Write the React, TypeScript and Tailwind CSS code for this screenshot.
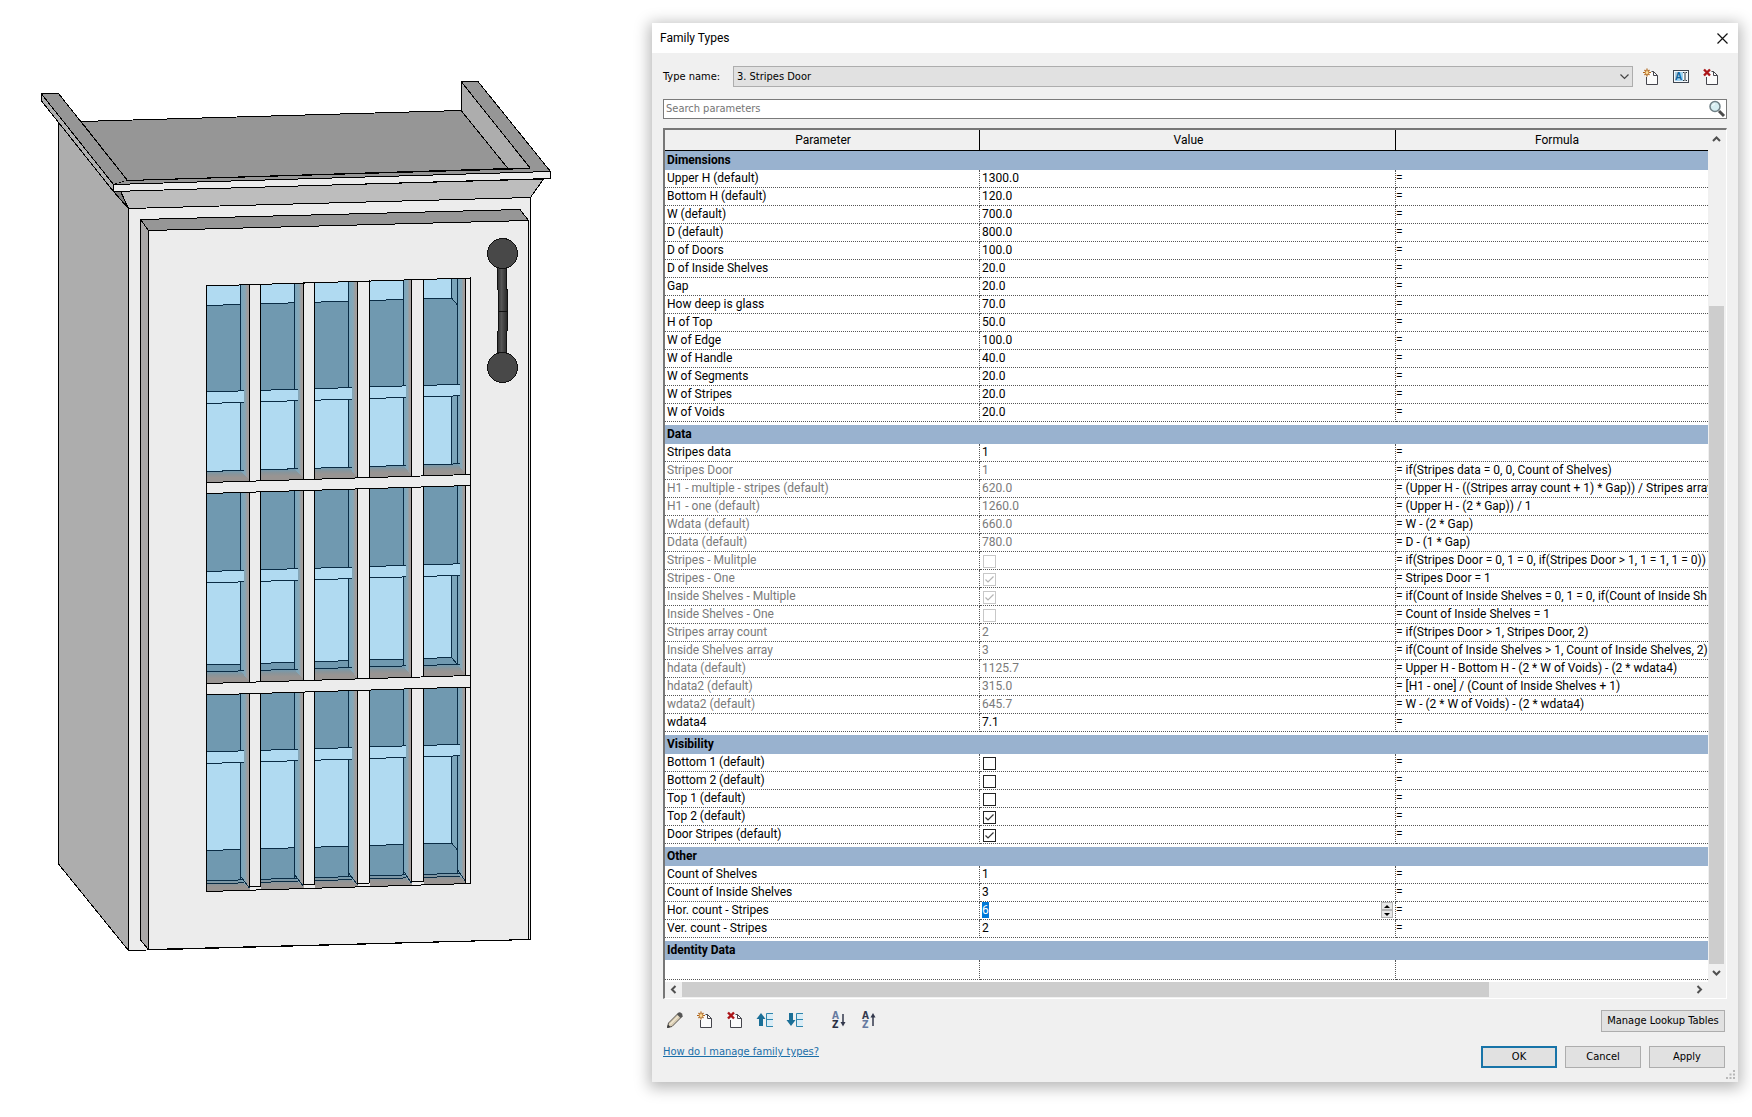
import { useEffect, useRef, useState } from 'react';

type Row = {
  name: string;
  value: string | boolean;
  formula?: string;
  locked?: boolean;
  spinner?: boolean;
};

const GROUPS: { title: string; rows: Row[] }[] = [
  {
    title: 'Dimensions',
    rows: [
      { name: 'Upper H (default)', value: '1300.0' },
      { name: 'Bottom H (default)', value: '120.0' },
      { name: 'W (default)', value: '700.0' },
      { name: 'D (default)', value: '800.0' },
      { name: 'D of Doors', value: '100.0' },
      { name: 'D of Inside Shelves', value: '20.0' },
      { name: 'Gap', value: '20.0' },
      { name: 'How deep is glass', value: '70.0' },
      { name: 'H of Top', value: '50.0' },
      { name: 'W of Edge', value: '100.0' },
      { name: 'W of Handle', value: '40.0' },
      { name: 'W of Segments', value: '20.0' },
      { name: 'W of Stripes', value: '20.0' },
      { name: 'W of Voids', value: '20.0' },
    ],
  },
  {
    title: 'Data',
    rows: [
      { name: 'Stripes data', value: '1' },
      { name: 'Stripes Door', value: '1', formula: 'if(Stripes data = 0, 0, Count of Shelves)', locked: true },
      { name: 'H1 - multiple - stripes (default)', value: '620.0', formula: '(Upper H - ((Stripes array count + 1) * Gap)) / Stripes array', locked: true },
      { name: 'H1 - one (default)', value: '1260.0', formula: '(Upper H - (2 * Gap)) / 1', locked: true },
      { name: 'Wdata (default)', value: '660.0', formula: 'W - (2 * Gap)', locked: true },
      { name: 'Ddata (default)', value: '780.0', formula: 'D - (1 * Gap)', locked: true },
      { name: 'Stripes - Mulitple', value: false, formula: 'if(Stripes Door = 0, 1 = 0, if(Stripes Door > 1, 1 = 1, 1 = 0))', locked: true },
      { name: 'Stripes - One', value: true, formula: 'Stripes Door = 1', locked: true },
      { name: 'Inside Shelves - Multiple', value: true, formula: 'if(Count of Inside Shelves = 0, 1 = 0, if(Count of Inside Sh', locked: true },
      { name: 'Inside Shelves - One', value: false, formula: 'Count of Inside Shelves = 1', locked: true },
      { name: 'Stripes array count', value: '2', formula: 'if(Stripes Door > 1, Stripes Door, 2)', locked: true },
      { name: 'Inside Shelves array', value: '3', formula: 'if(Count of Inside Shelves > 1, Count of Inside Shelves, 2)', locked: true },
      { name: 'hdata (default)', value: '1125.7', formula: 'Upper H - Bottom H - (2 * W of Voids) - (2 * wdata4)', locked: true },
      { name: 'hdata2 (default)', value: '315.0', formula: '[H1 - one] / (Count of Inside Shelves + 1)', locked: true },
      { name: 'wdata2 (default)', value: '645.7', formula: 'W - (2 * W of Voids) - (2 * wdata4)', locked: true },
      { name: 'wdata4', value: '7.1' },
    ],
  },
  {
    title: 'Visibility',
    rows: [
      { name: 'Bottom 1 (default)', value: false },
      { name: 'Bottom 2 (default)', value: false },
      { name: 'Top 1 (default)', value: false },
      { name: 'Top 2 (default)', value: true },
      { name: 'Door Stripes (default)', value: true },
    ],
  },
  {
    title: 'Other',
    rows: [
      { name: 'Count of Shelves', value: '1' },
      { name: 'Count of Inside Shelves', value: '3' },
      { name: 'Hor. count - Stripes', value: '6', spinner: true },
      { name: 'Ver. count - Stripes', value: '2' },
    ],
  },
];

/* ---------- cabinet drawing ---------- */

const EDGE = '#0a2c45';
const LIGHT = '#b0daf1';
const DARK = '#7099b0';

// the front is seen slightly from the left, so every level climbs to the right
const at = (x: number, y: number) => `${x},${(y - (x - 206) * 0.0303).toFixed(1)}`;
const quad = (x1: number, x2: number, y1: number, y2: number) =>
  [at(x1, y1), at(x2, y1), at(x2, y2), at(x1, y2)].join(' ');
const edge = (x1: number, x2: number, y: number) => `M${at(x1, y)}L${at(x2, y)}`;

const PANES = [
  { left: 206.5, wall: 240.5, shelf: 244, right: 249.5 },
  { left: 260.5, wall: 294.5, shelf: 298, right: 303.5 },
  { left: 314.5, wall: 348.5, shelf: 352, right: 357.5 },
  { left: 369.5, wall: 403.5, shelf: 406, right: 411.5 },
  { left: 423.5, wall: 457.5, shelf: 460, right: 465.5 },
];

const SECTIONS = [
  { top: 286, ceiling: 305.5, shelf: 392, back: 471.5, floor: 471.5, bottom: 482.5 },
  { top: 493.5, ceiling: 493.5, shelf: 571.5, back: 665, floor: 672, bottom: 683.5 },
  { top: 695, ceiling: 695, shelf: 752, back: 850.5, floor: 881, bottom: 891.5 },
];

function Pane({ pane, section }: { pane: (typeof PANES)[0]; section: (typeof SECTIONS)[0] }) {
  const { left, wall, shelf, right } = pane;
  const s = section;
  const last = left > 420;
  const backEnd = last ? 451.5 : wall;
  const openTop = s.ceiling > s.top;
  const openFloor = s.floor > s.back;
  return (
    <g>
      <polygon points={quad(left, right, s.top, s.bottom)} fill={DARK} />
      {openTop && <polygon points={quad(left, backEnd, s.top, s.ceiling)} fill={LIGHT} />}
      <polygon points={quad(left, backEnd, s.shelf, s.back)} fill={LIGHT} />
      {last && (
        <g stroke={EDGE}>
          <polygon points={[at(451.5, s.shelf), at(wall, s.shelf), at(wall, openFloor ? s.back + 7 : s.back), at(451.5, s.back)].join(' ')} fill="#7ba5ba" />
          {openTop && (
            <polygon points={[at(451.5, s.top), at(wall, s.top), at(wall, s.ceiling + 7), at(451.5, s.ceiling)].join(' ')} fill="#7ba5ba" />
          )}
        </g>
      )}
      <polygon points={quad(left, right, s.floor, s.bottom)} fill="url(#sill)" />
      <polygon points={[at(wall, s.top), at(right, s.top), at(right, s.bottom - 1), at(wall, s.floor)].join(' ')} fill="url(#jamb)" />
      <path d={`M${at(wall, s.top)}L${at(wall, s.floor)}`} stroke={EDGE} />
      {openTop && <path d={edge(left, backEnd, s.ceiling)} stroke={EDGE} />}
      <path d={edge(left, backEnd, s.back)} stroke={EDGE} />
      <path d={edge(left, shelf, s.floor)} stroke={EDGE} />
      {s.bottom > 880 && <path d={`${edge(left, right - 5, s.floor + 3)}M${at(wall, s.floor - 4)}L${at(right, s.bottom - 2)}`} stroke={EDGE} />}
      <polygon points={quad(left, shelf, s.shelf, s.shelf + 11.5)} fill={LIGHT} />
      <path d={edge(left, shelf, s.shelf) + edge(left, shelf, s.shelf + 11.5)} stroke={EDGE} />
    </g>
  );
}

function Cabinet() {
  return (
    <svg viewBox="30 70 530 890" width="530" height="890" fill="none" stroke="none" shapeRendering="crispEdges" role="img" aria-label="Cabinet with stripes door">
      <defs>
        <linearGradient id="jamb">
          <stop offset="0" stopColor="#78a5bd" />
          <stop offset="0.5" stopColor="#86a7b7" />
          <stop offset="0.75" stopColor="#9f9c9c" />
          <stop offset="1" stopColor="#a59f9d" />
        </linearGradient>
        <linearGradient id="sill" x2="0" y2="1">
          <stop offset="0" stopColor="#6f9bb3" />
          <stop offset="0.35" stopColor="#8a9499" />
          <stop offset="0.6" stopColor="#989492" />
        </linearGradient>
        <linearGradient id="bar">
          <stop offset="0" stopColor="#303030" />
          <stop offset="0.4" stopColor="#565656" />
          <stop offset="1" stopColor="#262626" />
        </linearGradient>
      </defs>
      <g stroke="#000">
        {/* body */}
        <polygon points="58.5,122.5 128.5,208.5 128.5,950.5 58.5,864" fill="#adadad" />
        <polygon points="128.5,208.5 530.5,197.5 530.5,939.5 128.5,950.5" fill="#ececec" />
        {/* top board and crown */}
        <polygon points="81,121.5 461.5,110.5 508.5,168.5 127.5,180.5" fill="#969696" />
        <polygon points="113,191 120.5,191 128,208" fill="#7c7c7c" />
        <polygon points="41.5,94 113.5,184.5 113.5,191.5 41.5,101" fill="#b0b0b0" />
        <polygon points="41.5,94 58.5,93.5 127.5,180.5 113.5,184.5" fill="#969696" />
        <polygon points="461.5,82 530.5,168.5 508,168.5 461.5,111" fill="#adadad" />
        <polygon points="127.5,180.5 530.5,168.5 550.5,171.5 113.5,184.5" fill="#969696" stroke="none" />
        <path d="M127.5 180.5L530.5 168.5" />
        <polygon points="461.5,82 478,81.5 550.5,171.5 530.5,171.5 530.5,168.5" fill="#969696" stroke="none" />
        <path d="M530.5 168.5L461.5 82L478 81.5L550.5 171.5" />
        <polygon points="120.5,191 543.5,179 530.5,197.5 128.5,208.5" fill="#bdbdbd" />
        <polygon points="113.5,184.5 550.5,171.5 550.5,178.5 113.5,191.5" fill="#ececec" />
        {/* door */}
        <polygon points="140.5,219.5 148.5,230.5 148.5,949.5 140.5,940" fill="#aaa8a8" />
        <polygon points="140.5,219.5 520,209.5 528.5,220.5 148.5,230.5" fill="#969696" />
        <polygon points="148.5,230.5 528.5,220.5 528.5,939.5 148.5,949.5" fill="#ececec" />
      </g>
      {SECTIONS.map(section => PANES.map(pane => <Pane key={`${section.top}-${pane.left}`} pane={pane} section={section} />))}
      <g stroke="#000">
        {PANES.slice(0, 4).map((pane, i) => (
          <polygon key={pane.left} points={quad(pane.right, PANES[i + 1].left, 286, 888)} fill="#ececec" />
        ))}
        <polygon points={quad(465.5, 470.5, 286, 891)} fill="#ececec" />
        <polygon points={quad(206.5, 470.5, 482.5, 493.5)} fill="#ececec" />
        <polygon points={quad(206.5, 470.5, 683.5, 695)} fill="#ececec" />
        <polygon points={quad(206.5, 470.5, 286, 891.5)} />
      </g>
      {/* handle */}
      <path d="M497.5 267L498.5 311L497.5 352H506.5L507.5 311L506.5 267Z" fill="url(#bar)" stroke="#111" />
      <path d="M498 311.5H507.5" stroke="#111" />
      <circle cx="502.5" cy="253.5" r="15" fill="#484848" stroke="#111" />
      <circle cx="502.5" cy="367.5" r="15" fill="#484848" stroke="#111" />
    </svg>
  );
}

/* ---------- icons ---------- */

function PageIcon({ kind }: { kind: 'new' | 'delete' }) {
  return (
    <svg width="16" height="18" viewBox="0 0 16 18" fill="none">
      <path d="M3.5 8.5V16.5H14.5V7.5L11 3.5H8.5" fill="#fbfbfb" />
      <path d="M3.5 9V16.5H14.5V7.5H10.5V3.5H8.5M10.5 3.5L14.5 7.5" stroke="#45454c" />
      {kind === 'new' ? (
        <g stroke="#b0651a">
          <path d="M4 0.5V8.5M0 4.5H8M1.5 2L6.5 7M6.5 2L1.5 7" strokeWidth="1.2" />
          <circle cx="4" cy="4.5" r="1.5" fill="#ffdf9a" stroke="none" />
        </g>
      ) : (
        <path d="M1 1.5L7 7.5M7 1.5L1 7.5" stroke="#ab1519" strokeWidth="2.4" />
      )}
    </svg>
  );
}

function RenameIcon() {
  return (
    <svg width="18" height="16" viewBox="0 0 18 16" fill="none">
      <rect x="1.5" y="1.5" width="15" height="12" fill="#f5f8fa" stroke="#3f4650" />
      <rect x="3" y="3" width="8" height="9" fill="#a5d2ee" />
      <text x="3" y="11" fontSize="10" fontWeight="700" fontFamily="Liberation Sans, sans-serif" fill="#12649a">A</text>
      <path d="M11 3.5H12.5M13.5 3.5H15M13 4V11M11 11.5H12.5M13.5 11.5H15" stroke="#26323c" />
    </svg>
  );
}

function PencilIcon() {
  return (
    <svg width="18" height="18" viewBox="0 0 18 18" fill="none">
      <path d="M1.5 16.5L2.5 12L12.5 2L16 5.5L6 15.5Z" fill="#d9cdb4" stroke="#57534e" />
      <path d="M4 13.5L14 3.5" stroke="#fff7e2" />
      <path d="M11 3.5L12.5 1.5Q14 0.8 15.5 2.2T16.5 5.5L14.5 7Z" fill="#555" />
      <path d="M1 17L2 13.5L4.5 16Z" fill="#3a3a3a" />
    </svg>
  );
}

function MoveIcon({ down }: { down?: boolean }) {
  return (
    <svg width="18" height="18" viewBox="0 0 18 18" fill="none">
      <path d={down ? 'M3 2H7V9H9.5L5 15L0.5 9H3Z' : 'M3 15H7V8H9.5L5 2L0.5 8H3Z'} fill="#1b6f97" />
      <rect x="11" y="2" width="6" height="13" fill="#d9edf7" />
      <path d="M17 2.5H10.5V15.5H17M10.5 8.5H17" stroke="#2f86ae" />
    </svg>
  );
}

function SortIcon({ up }: { up?: boolean }) {
  return (
    <svg width="16" height="18" viewBox="0 0 16 18" fill="none">
      <g fontSize="10" fontWeight="700" fontFamily="DejaVu Sans Condensed, DejaVu Sans, sans-serif">
        <text x="1" y="8" fill={up ? '#33384c' : '#667a9f'}>A</text>
        <text x="1" y="17" fill={up ? '#667a9f' : '#2b3044'}>Z</text>
      </g>
      <path d={up ? 'M12 15V4' : 'M12 3V13'} stroke="#33384c" strokeWidth="1.5" />
      <path d={up ? 'M9.5 6.5L12 2L14.5 6.5Z' : 'M9.5 11L12 15.5L14.5 11Z'} fill="#33384c" />
    </svg>
  );
}

function SearchIcon() {
  return (
    <svg width="18" height="18" viewBox="0 0 18 18" fill="none">
      <path d="M11 11L16 16" stroke="#4a4a4a" strokeWidth="3" />
      <circle cx="7" cy="6.5" r="5" fill="#d6eef2" stroke="#6f7f85" strokeWidth="1.5" />
      <path d="M4.5 6Q5 4 7 3.8" stroke="#fff" />
    </svg>
  );
}

const CHEVRONS = {
  up: 'M2 7L5.5 3.5L9 7',
  down: 'M2 4L5.5 7.5L9 4',
  left: 'M7.5 2L4 5.5L7.5 9',
  right: 'M3.5 2L7 5.5L3.5 9',
};

function Chevron({ dir }: { dir: keyof typeof CHEVRONS }) {
  return (
    <svg width="11" height="11" viewBox="0 0 11 11" fill="none">
      <path d={CHEVRONS[dir]} stroke="#505050" strokeWidth="2" />
    </svg>
  );
}

function Grip() {
  return (
    <svg width="9" height="9" viewBox="0 0 9 9" fill="#b8b8b8">
      <path d="M7 0h2v2h-2zM3.5 3.5h2v2h-2zM7 3.5h2v2h-2zM0 7h2v2h-2zM3.5 7h2v2h-2zM7 7h2v2h-2z" />
    </svg>
  );
}

/* ---------- table ---------- */

function Check({ label, locked, initial }: { label: string; locked?: boolean; initial: boolean }) {
  const [on, setOn] = useState(initial);
  return (
    <span className="ml-px grid w-[13px] pt-[3px]">
      <input
        type="checkbox"
        aria-label={label}
        checked={on}
        disabled={locked}
        onChange={e => setOn(e.target.checked)}
        className="col-start-1 row-start-1 size-[13px] appearance-none border border-[#222] bg-white disabled:border-[#c8c8c8]"
      />
      {on && (
        <svg viewBox="0 0 13 13" fill="none" className="pointer-events-none col-start-1 row-start-1 size-[13px]">
          <path d="M2.5 6.5L5 9L10.5 3.5" stroke={locked ? '#b4b4b4' : '#333'} strokeWidth="1.2" />
        </svg>
      )}
    </span>
  );
}

function ValueCell({ row }: { row: Row }) {
  const ref = useRef<HTMLInputElement>(null);

  useEffect(() => {
    if (row.spinner) {
      ref.current?.focus();
      ref.current?.select();
    }
  }, [row.spinner]);

  if (typeof row.value === 'boolean') {
    return <Check label={row.name} locked={row.locked} initial={row.value} />;
  }
  return (
    <div className="flex h-4 items-center">
      <input
        ref={ref}
        aria-label={row.name}
        defaultValue={row.value}
        readOnly={row.locked}
        className="h-4 min-w-0 flex-1 bg-transparent leading-4 outline-none selection:bg-[#0078d7] selection:text-white"
      />
      {row.spinner && (
        <span className="mr-[2px] flex w-3 flex-col">
          <button aria-label="Increase" className="flex h-2 items-center justify-center border border-[#b5b5b5] bg-[#e8e8e8]">
            <svg width="6" height="3" viewBox="0 0 6 3"><path d="M0 3L3 0L6 3Z" fill="#000" /></svg>
          </button>
          <button aria-label="Decrease" className="flex h-2 items-center justify-center border border-[#b5b5b5] bg-[#e8e8e8]">
            <svg width="6" height="3" viewBox="0 0 6 3"><path d="M0 0L3 3L6 0Z" fill="#000" /></svg>
          </button>
        </span>
      )}
    </div>
  );
}

function GroupHeader({ title, first }: { title: string; first?: boolean }) {
  return (
    <tr>
      <th
        colSpan={3}
        className={
          first
            ? 'h-[19px] bg-[#99b2cf] p-0 pb-[2px] pl-[2px] text-left font-bold'
            : 'h-[22px] border-t-[3px] border-white bg-[#99b2cf] p-0 pb-[2px] pl-[2px] text-left font-bold'
        }
      >
        {title}
      </th>
    </tr>
  );
}

function ParameterTable() {
  const cell = 'h-[18px] border-b border-dotted border-[#555] p-0 align-top';
  return (
    <table className="w-full table-fixed border-separate border-spacing-0 bg-white font-[Roboto,sans-serif] text-[12px] leading-4 text-black">
      <colgroup>
        <col className="w-[315px]" />
        <col className="w-[416px]" />
        <col />
      </colgroup>
      <thead>
        <tr className="bg-[#f0f0f0]">
          <th className="h-[21px] border-r border-b border-black p-0 pl-[2px] font-normal">Parameter</th>
          <th className="h-[21px] border-r border-b border-black p-0 pl-[2px] font-normal">Value</th>
          <th className="h-[21px] border-b border-black p-0 pl-[10px] font-normal">Formula</th>
        </tr>
      </thead>
      {GROUPS.map((group, i) => (
        <tbody key={group.title}>
          <GroupHeader title={group.title} first={i === 0} />
          {group.rows.map(row => (
            <tr key={row.name}>
              <td className={`${cell} truncate border-r pl-[2px] ${row.locked ? 'text-[#7a7a7a]' : ''}`}>{row.name}</td>
              <td className={`${cell} border-r pl-[2px] ${row.locked ? 'text-[#7a7a7a]' : ''}`}>
                <ValueCell row={row} />
              </td>
              <td className={`${cell} overflow-hidden whitespace-nowrap`}>= {row.formula}</td>
            </tr>
          ))}
        </tbody>
      ))}
      <tbody>
        <GroupHeader title="Identity Data" />
        <tr>
          <td className="h-5 border-r border-b border-dotted border-[#555]" />
          <td className="h-5 border-r border-b border-dotted border-[#555]" />
          <td className="h-5 border-b border-dotted border-[#555]" />
        </tr>
      </tbody>
    </table>
  );
}

const iconButton = 'flex h-6 w-6 items-center justify-center';
const pushButton = 'h-[22px] border border-[#adadad] bg-[#e1e1e1] text-center';

function FamilyTypes() {
  return (
    <main className="mt-[23px] mr-[14px] min-w-0 flex-1 self-start bg-[#f0f0f0] text-black shadow-[0_3px_14px_3px_rgba(0,0,0,0.28)]">
      <header className="flex h-[30px] items-center justify-between bg-white pr-[10px] pl-2">
        <h1 className="font-[Roboto,sans-serif] text-[12px] leading-4">Family Types</h1>
        <button aria-label="Close">
          <svg width="11" height="11" viewBox="0 0 11 11" fill="none"><path d="M0.5 0.5L10.5 10.5M10.5 0.5L0.5 10.5" stroke="#111" strokeWidth="1.2" /></svg>
        </button>
      </header>

      <div className="px-[11px] pt-[13px] font-['DejaVu_Sans_Condensed','DejaVu_Sans',sans-serif] text-[11px] leading-4">
        <div className="flex h-[21px] items-center">
          <label htmlFor="type-name" className="w-[70px]">Type name:</label>
          <div className="grid flex-1 items-center">
            <select id="type-name" className="col-start-1 row-start-1 h-[21px] w-full appearance-none border border-[#adadad] bg-[#e1e1e1] pl-[3px]">
              <option>3. Stripes Door</option>
            </select>
            <svg width="9" height="6" viewBox="0 0 9 6" fill="none" className="pointer-events-none col-start-1 row-start-1 mr-1 justify-self-end">
              <path d="M0.5 0.5L4.5 4.5L8.5 0.5" stroke="#444" strokeWidth="1.2" />
            </svg>
          </div>
          <div className="mr-1 ml-[6px] flex gap-[6px]">
            <button aria-label="New type" className={iconButton}><PageIcon kind="new" /></button>
            <button aria-label="Rename type" className={iconButton}><RenameIcon /></button>
            <button aria-label="Delete type" className={iconButton}><PageIcon kind="delete" /></button>
          </div>
        </div>

        <div className="mt-3 flex h-5 items-center border border-[#7a7a7a] bg-white">
          <input aria-label="Search parameters" placeholder="Search parameters" className="min-w-0 flex-1 pl-[2px] outline-none placeholder:text-[#757575]" />
          <button aria-label="Search"><SearchIcon /></button>
        </div>

        <div className="mt-[9px] border-t-2 border-r border-b border-l-2 border-t-[#777] border-r-white border-b-white border-l-[#777]">
          <div className="flex">
            <div className="min-w-0 flex-1 bg-white pb-[2px]">
              <ParameterTable />
            </div>
            <div className="flex w-[18px] flex-col">
              <button aria-label="Scroll up" className="flex h-[18px] items-center justify-center pr-px"><Chevron dir="up" /></button>
              <div className="flex flex-1 flex-col pt-[158px]">
                <div className="mr-[2px] ml-px flex-1 bg-[#cdcdcd]" />
              </div>
              <button aria-label="Scroll down" className="flex h-[18px] items-center justify-center pr-px pb-[2px]"><Chevron dir="down" /></button>
            </div>
          </div>
          <div className="flex h-4 pr-[18px]">
            <button aria-label="Scroll left" className="flex w-[17px] items-center justify-center pb-px"><Chevron dir="left" /></button>
            <div className="flex-1">
              <div className="h-[15px] w-4/5 bg-[#cdcdcd]" />
            </div>
            <button aria-label="Scroll right" className="flex w-[17px] items-center justify-center pb-px"><Chevron dir="right" /></button>
          </div>
        </div>

        <div className="mt-[9px] mr-[2px] flex items-start justify-between">
          <div className="flex gap-[6px]">
            <button aria-label="Edit parameter" className={iconButton}><PencilIcon /></button>
            <button aria-label="New parameter" className={iconButton}><PageIcon kind="new" /></button>
            <button aria-label="Delete parameter" className={iconButton}><PageIcon kind="delete" /></button>
            <button aria-label="Move parameter up" className={iconButton}><MoveIcon /></button>
            <button aria-label="Move parameter down" className={iconButton}><MoveIcon down /></button>
            <span className="w-2" />
            <button aria-label="Sort ascending" className={iconButton}><SortIcon /></button>
            <button aria-label="Sort descending" className={iconButton}><SortIcon up /></button>
          </div>
          <button className={`${pushButton} mt-[2px] w-[124px]`}>Manage Lookup Tables</button>
        </div>

        <div className="mt-3 mr-[2px] flex items-start justify-between">
          <a href="#help" className="text-[#1a6ea8] underline">How do I manage family types?</a>
          <div className="flex gap-2 pt-[2px]">
            <button className="h-[22px] w-[76px] border-2 border-[#1874a8] bg-[#e1e1e1]">OK</button>
            <button className={`${pushButton} w-[76px]`}>Cancel</button>
            <button className={`${pushButton} w-[76px]`}>Apply</button>
          </div>
        </div>
      </div>
      <div className="flex h-[14px] items-end justify-end pr-[3px] pb-[3px]">
        <Grip />
      </div>
    </main>
  );
}

export default function App() {
  return (
    <div className="flex min-h-screen bg-white">
      <section className="w-[652px] shrink-0 pt-[70px] pl-[30px]">
        <Cabinet />
      </section>
      <FamilyTypes />
    </div>
  );
}
